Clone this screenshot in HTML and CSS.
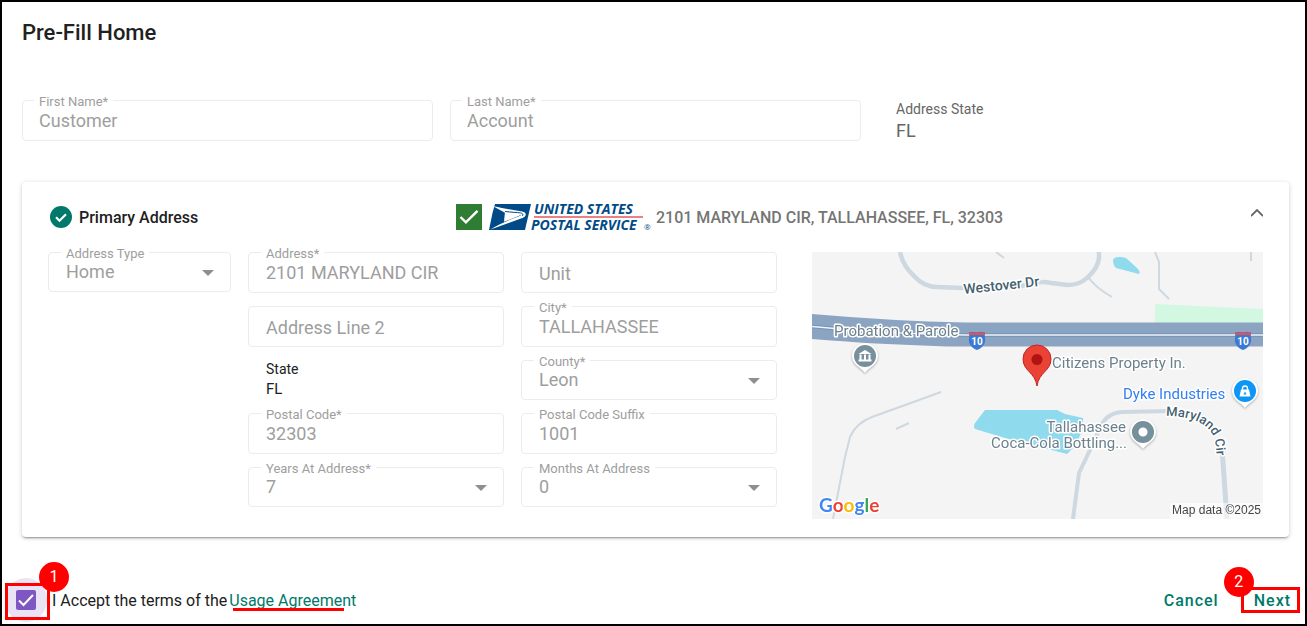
FILE: index.html
```html
<!DOCTYPE html>
<html lang="en">
<head>
    <meta charset="UTF-8">
    <meta name="viewport" content="width=device-width, initial-scale=1.0">
    <title>Pre-Fill Home</title>
    <link rel="stylesheet" href="styles.css">
</head>
<body>
    <div class="page">
        <main class="content">
            <h1>Pre-Fill Home</h1>

            <!-- Customer name -->
            <div class="name-row">
                <div class="field">
                    <label for="firstName">First Name*</label>
                    <input type="text" id="firstName" value="Customer" disabled>
                </div>
                <div class="field">
                    <label for="lastName">Last Name*</label>
                    <input type="text" id="lastName" value="Account" disabled>
                </div>
                <div class="address-state">
                    <span class="caption">Address State</span>
                    <span class="value">FL</span>
                </div>
            </div>

            <!-- Address panel -->
            <section class="card">
                <div class="card-header">
                    <div class="card-title">
                        <svg class="status-icon" viewBox="0 0 22 22">
                            <circle cx="11" cy="11" r="11" fill="#00796b"/>
                            <path d="M6 11.2l3.5 3.5 6.5-6.5" fill="none" stroke="#fff" stroke-width="2.2"/>
                        </svg>
                        <h2>Primary Address</h2>
                    </div>
                    <div class="verified">
                        <svg class="verified-icon" viewBox="0 0 26 26">
                            <rect width="26" height="26" fill="#2e7d32"/>
                            <path d="M4.5 13l5.4 5.4L21.5 6.8" fill="none" stroke="#fff" stroke-width="2.4"/>
                        </svg>
                        <svg class="usps-logo" viewBox="0 0 164 28">
                            <path d="M7 1h36l-6 26H1L4.5 10z" fill="#004b87"/>
                            <path d="M5 3.2c11 2 20 4.1 28 5 3.5.4 5.5 2 4.5 4.2-.7 1.5-2 2.2-4.5 3.2L2.5 26.5C11 21 22 16.5 31 13.2c2-.8 2.6-1.6.6-2L17 9.7z" fill="#fff"/>
                            <path d="M17 8.5l15 1.7c1.5.3 1 1.8-.8 2.5L16 18.8z" fill="#fff"/>
                            <path d="M17 8.5c7 .8 12 .9 15.5 1.4 2 .4 3 1.3 2 3" fill="none" stroke="#004b87" stroke-width="1"/>
                            <text x="46" y="11">UNITED STATES</text>
                            <path d="M46 14h109" stroke="#e4575c" stroke-width="1.3"/>
                            <text x="43" y="27">POSTAL SERVICE</text>
                            <text class="registered" x="156" y="27">®</text>
                        </svg>
                        <span>2101 MARYLAND CIR, TALLAHASSEE, FL, 32303</span>
                    </div>
                    <button type="button" class="toggle" aria-label="Collapse">
                        <svg viewBox="0 0 12 8"><path d="M0 7l6-6 6 6" fill="none" stroke="#666" stroke-width="1.8"/></svg>
                    </button>
                </div>

                <div class="card-body">
                    <div class="column">
                        <div class="field select">
                            <label for="addressType">Address Type</label>
                            <select id="addressType" disabled><option>Home</option></select>
                        </div>
                    </div>
                    <div class="column">
                        <div class="field">
                            <label for="address">Address*</label>
                            <input type="text" id="address" value="2101 MARYLAND CIR" disabled>
                        </div>
                        <div class="field">
                            <input type="text" id="address2" placeholder="Address Line 2" aria-label="Address Line 2" disabled>
                        </div>
                        <div class="state">
                            <span class="caption">State</span>
                            <span>FL</span>
                        </div>
                        <div class="field">
                            <label for="postalCode">Postal Code*</label>
                            <input type="text" id="postalCode" value="32303" disabled>
                        </div>
                        <div class="field select">
                            <label for="years">Years At Address*</label>
                            <select id="years" disabled><option>7</option></select>
                        </div>
                    </div>
                    <div class="column">
                        <div class="field">
                            <input type="text" id="unit" placeholder="Unit" aria-label="Unit" disabled>
                        </div>
                        <div class="field">
                            <label for="city">City*</label>
                            <input type="text" id="city" value="TALLAHASSEE" disabled>
                        </div>
                        <div class="field select">
                            <label for="county">County*</label>
                            <select id="county" disabled><option>Leon</option></select>
                        </div>
                        <div class="field">
                            <label for="suffix">Postal Code Suffix</label>
                            <input type="text" id="suffix" value="1001" disabled>
                        </div>
                        <div class="field select">
                            <label for="months">Months At Address</label>
                            <select id="months" disabled><option>0</option></select>
                        </div>
                    </div>

                    <!-- Map -->
                    <div class="map">
                        <svg viewBox="0 0 451 267">
                            <defs>
                                <path id="pin" d="M0 17C-3 12-13 9-13 0a13 13 0 0 1 26 0C13 9 3 12 0 17z"/>
                                <g id="shield">
                                    <path d="M-8 0H8c0 2-.5 3 0 6 1 6-3 10-8 12-5-2-9-6-8-12 .5-3 0-4 0-6z" fill="#3b7ad1"/>
                                    <path d="M-8 0l4 1 4-1 4 1 4-1v3H-8z" fill="#e0525a"/>
                                    <text y="13" text-anchor="middle">10</text>
                                </g>
                                <path id="marylandCurve" d="M354 164C380 164 397 172 402 186Q405 194 405 220"/>
                            </defs>
                            <rect width="451" height="267" fill="#f4f4f4"/>
                            <path d="M343 52L451 57V72H343z" fill="#d3f8e2"/>
                            <path d="M301 8C302 5 306 4 314 6L325 16Q329 20 327 22L304 16Q301 13 301 8z" fill="#90daee"/>
                            <path d="M173 158H245L253 162L271 166V176L264 193L255 202L228 195L193 186L163 177Q161 174 163 171z" fill="#90daee"/>
                            <g fill="none" stroke="#cdd8e1" stroke-width="2">
                                <path d="M88 0Q91 14 102 24Q112 35 125 35L151 36L210 34Q226 28 239 31L256 33Q268 33 276 25Q286 16 287 6V0" stroke-width="4.5"/>
                                <path d="M276 25Q284 36 300 45M184 0L192 6M343 0L347 10V37L357 47M439 0V9"/>
                                <path d="M21 267L33 205L38 185Q44 171 60 165L129 140M84 177L97 171"/>
                                <path d="M261 267L267 221L278 198L288 176Q294 161 310 160L358 159" stroke-width="4"/>
                                <path d="M410 196L415 267" stroke-width="5"/>
                            </g>
                            <path d="M0 62Q80 69 153 70.5H451V94.5H135Q60 92 0 87z" fill="#8ba4c2"/>
                            <path d="M0 74.5Q75 82 153 83H451" fill="none" stroke="#7691b4" stroke-width="3.5"/>
                            <path d="M0 74.5Q75 82 153 83H451" fill="none" stroke="#eef3f8" stroke-width="1.6"/>
                            <use href="#shield" x="165" y="80"/>
                            <use href="#shield" x="431" y="80"/>

                            <g class="street">
                                <text x="152" y="42" transform="rotate(-6 152 42)">Westover Dr</text>
                                <text class="bend"><textPath href="#marylandCurve">Maryland Cir</textPath></text>
                            </g>

                            <g class="place-pin" fill="#fff">
                                <use href="#pin" x="53" y="104"/>
                                <use href="#pin" x="331" y="180"/>
                                <use href="#pin" x="433" y="139"/>
                            </g>
                            <circle cx="53" cy="104" r="11" fill="#78909c"/>
                            <path d="M46.5 102L53 98l6.5 4zM47.5 102.5h2v5h-2zM52 102.5h2v5h-2zM56.5 102.5h2v5h-2zM46.5 107.5h13v2h-13z" fill="#fff"/>
                            <circle cx="331" cy="180" r="7.8" fill="none" stroke="#78909c" stroke-width="6.5"/>
                            <circle cx="433" cy="139" r="11" fill="#0d96f6"/>
                            <path d="M429 137.5h8l1.5 7h-11z" fill="#fff"/>
                            <path d="M430.5 138v-1.500a2.500 2.500 0 0 1 5 0v1.500" fill="none" stroke="#fff" stroke-width="1.3"/>
                            <path d="M431.5 142.5l1.500-3 1.500 3z" fill="#0d96f6"/>

                            <g class="place">
                                <text x="22" y="84">Probation &amp; Parole</text>
                                <text x="240" y="116">Citizens Property In.</text>
                                <text class="shop" x="311" y="147">Dyke Industries</text>
                                <text x="314" y="180" text-anchor="end">Tallahassee</text>
                                <text x="315" y="196" text-anchor="end">Coca-Cola Bottling...</text>
                            </g>

                            <path d="M225 134C223 120 211 119 211 107a14 14 0 0 1 28 0C239 119 227 120 225 134z" fill="#ea4335" stroke="#c5221f" stroke-width="1"/>
                            <circle cx="225" cy="107.5" r="5.5" fill="#b11313"/>

                            <text class="google" x="7" y="260"><tspan fill="#4285f4">G</tspan><tspan fill="#ea4335">o</tspan><tspan fill="#fbbc05">o</tspan><tspan fill="#4285f4">g</tspan><tspan fill="#34a853">l</tspan><tspan fill="#ea4335">e</tspan></text>
                            <rect x="358" y="251" width="93" height="16" fill="#fff" fill-opacity="0.6"/>
                            <text class="credit" x="449" y="262" text-anchor="end">Map data ©2025</text>
                        </svg>
                    </div>
                </div>
            </section>
        </main>

        <footer class="footer">
            <div class="terms">
                <div class="tick">
                    <input type="checkbox" id="accept" checked>
                    <svg viewBox="0 0 20 20"><path d="M3 10.5l4.5 4.5L17 5" fill="none" stroke="#fff" stroke-width="2"/></svg>
                    <span class="mark"></span>
                    <span class="step">1</span>
                </div>
                <label for="accept">I Accept the terms of the</label>
                <a href="#" class="usage-link">Usage Agreement</a>
            </div>
            <div class="actions">
                <button type="button">Cancel</button>
                <div class="next">
                    <button type="button">Next</button>
                    <span class="step">2</span>
                </div>
            </div>
        </footer>
    </div>
</body>
</html>
```

FILE: styles.css
```css
* {
    margin: 0;
    padding: 0;
    box-sizing: border-box;
}

body {
    font-family: Roboto, "Liberation Sans", sans-serif;
    font-size: 16px;
    color: #212121;
    background: white;
}

.page {
    display: flex;
    flex-direction: column;
    min-height: 100vh;
    border: 2px solid black;
}

.content {
    padding: 17px 16px 0 20px;
}

h1 {
    font-size: 22px;
    line-height: 28px;
    font-weight: 500;
}

h2 {
    font-size: 16px;
    font-weight: 500;
}

button {
    border: none;
    background: none;
    font-family: inherit;
    cursor: pointer;
}

/* Name row */
.name-row {
    display: grid;
    grid-template-columns: repeat(3, 1fr);
    gap: 17px;
    margin-top: 53px;
}

.caption {
    font-size: 14px;
    line-height: 18px;
}

.address-state {
    display: flex;
    flex-direction: column;
    gap: 3px;
    padding-left: 18px;
    color: #666;
}

.address-state .value {
    font-size: 18px;
    line-height: 20px;
}

/* Outlined fields */
.field {
    position: relative;
    height: 41px;
}

.field label {
    position: absolute;
    top: -6px;
    left: 12px;
    padding: 0 5px;
    background: white;
    color: #9e9e9e;
    font-size: 13px;
    line-height: 16px;
}

.field input,
.field select {
    width: 100%;
    height: 100%;
    padding: 0 16px;
    border: 1px solid #ececec;
    border-radius: 4px;
    background: white;
    color: #9e9e9e;
    font-family: inherit;
    font-size: 18px;
    opacity: 1;
    appearance: none;
}

.card .field label {
    left: 13px;
}

.card .field input,
.card .field select {
    padding-left: 17px;
}

.field input::placeholder {
    color: #9e9e9e;
    opacity: 1;
}

.field input:placeholder-shown {
    padding-top: 2px;
}

.field.select {
    height: 40px;
}

.field.select select {
    padding-bottom: 2px;
}

.field.select::after {
    content: "";
    position: absolute;
    top: 18px;
    right: 17px;
    border: 6px solid transparent;
    border-top-color: #8f8f8f;
    border-bottom: none;
}

/* Address panel */
.card {
    margin-top: 41px;
    padding: 21px 26px 18px;
    border-radius: 4px;
    box-shadow: 0 2px 2px -1px rgba(0,0,0,0.35), 0 1px 5px rgba(0,0,0,0.18);
}

.card-header {
    display: grid;
    grid-template-columns: 408fr 789fr 18px;
    align-items: center;
    height: 28px;
    margin-bottom: 21px;
}

.card-title {
    display: flex;
    align-items: center;
    gap: 7px;
    padding-left: 2px;
}

.status-icon {
    width: 22px;
    height: 22px;
}

.verified {
    display: flex;
    align-items: center;
    gap: 6px;
    color: #757575;
    font-weight: 500;
    white-space: nowrap;
}

.verified-icon {
    width: 26px;
    height: 26px;
}

.usps-logo {
    width: 164px;
    height: 28px;
    margin-right: -2px;
    overflow: visible;
}

.usps-logo text {
    font: italic 700 14px "Open Sans", sans-serif;
    fill: #004b87;
}

.usps-logo .registered {
    font: 8px "Open Sans", sans-serif;
}

.toggle {
    display: flex;
    justify-content: flex-end;
    padding-bottom: 8px;
}

.toggle svg {
    width: 12px;
    height: 8px;
}

.card-body {
    display: grid;
    grid-template-columns: 183fr 256fr 256fr 469fr;
    column-gap: 17px;
}

.column {
    display: flex;
    flex-direction: column;
    gap: 13px;
}

.state {
    display: flex;
    flex-direction: column;
    gap: 2px;
    height: 40px;
    padding-left: 18px;
    font-size: 15px;
}

.map {
    padding-left: 18px;
}

.map svg {
    display: block;
    width: 100%;
    overflow: hidden;
}

#shield text {
    font-size: 10px;
    font-weight: 700;
    fill: white;
}

.place-pin {
    filter: drop-shadow(0 1px 1px rgba(0,0,0,0.3));
}

.street text,
.place text,
.google {
    stroke: white;
    stroke-width: 3px;
    stroke-linejoin: round;
    paint-order: stroke;
}

.street text {
    font-size: 14px;
    font-weight: 500;
    fill: #455f70;
}

.street .bend {
    font-size: 13px;
}

.place text {
    font-size: 15px;
    fill: #6b818c;
}

.place .shop {
    fill: #3380f0;
}

.google {
    font: 19px Lato, sans-serif;
    font-weight: 700;
}

.credit {
    font: 12px "Liberation Sans", sans-serif;
    fill: #444;
}

/* Footer */
.footer {
    display: flex;
    justify-content: space-between;
    align-items: center;
    margin-top: 41px;
    padding: 0 5px 0 3px;
}

.terms {
    display: flex;
    align-items: center;
}

.terms label {
    margin: 0 2px 0 5px;
}

.tick {
    position: relative;
    display: grid;
    place-items: center;
    width: 42px;
    height: 44px;
    border-radius: 50%;
    background: #e9e3f5;
}

.tick input {
    width: 20px;
    height: 20px;
    border-radius: 2px;
    background: #7e57c2;
    appearance: none;
}

.tick svg {
    position: absolute;
    width: 20px;
    height: 20px;
    pointer-events: none;
}

.mark {
    position: absolute;
    top: 5px;
    left: 0;
    width: 45px;
    height: 37px;
    border: 3px solid red;
    pointer-events: none;
}

.step {
    position: absolute;
    width: 30px;
    height: 30px;
    border-radius: 50%;
    background: red;
    color: white;
    font-size: 16px;
    line-height: 30px;
    text-align: center;
}

.tick .step {
    top: -16px;
    left: 34px;
}

.usage-link {
    position: relative;
    color: #00796b;
    text-decoration: none;
}

.usage-link::after {
    content: "";
    position: absolute;
    left: 4px;
    right: 12px;
    bottom: -1px;
    height: 3px;
    background: red;
}

.actions {
    display: flex;
    align-items: center;
    gap: 22px;
}

.actions button {
    height: 20px;
    color: #00796b;
    font-size: 16px;
    font-weight: 500;
    letter-spacing: 1px;
}

.next {
    position: relative;
    padding: 0 6px 0 10px;
    border: 3px solid red;
}

.next .step {
    top: -23px;
    left: -20px;
}
```
